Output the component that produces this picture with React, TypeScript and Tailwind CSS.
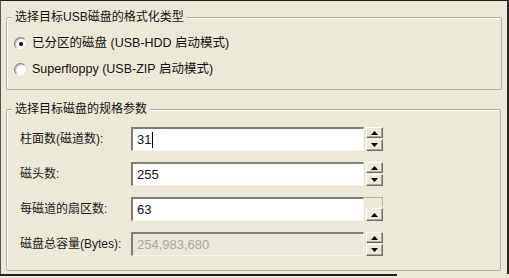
import React from "react";

const font = { fontFamily: '"Liberation Sans", "Noto Sans CJK SC", sans-serif' };

function Tri({ up }: { up: boolean }) {
  return (
    <svg width="7" height="4" viewBox="0 0 7 4">
      {up ? <polygon points="0,4 7,4 3.5,0" fill="#000" /> : <polygon points="0,0 7,0 3.5,4" fill="#000" />}
    </svg>
  );
}

function SpinBtn({ up, h = "h-[11px]" }: { up: boolean; h?: string }) {
  return (
    <div
      className={`w-[17px] ${h} shrink-0 bg-[#ece9d8] border-t border-l border-t-white border-l-white border-r border-b border-r-[#716f64] border-b-[#716f64] shadow-[inset_-1px_-1px_0_#aca899] flex items-center justify-center`}
    >
      <Tri up={up} />
    </div>
  );
}

function Field({
  label,
  value,
  disabled,
  caret,
  odd,
}: {
  label: string;
  value: string;
  disabled?: boolean;
  caret?: boolean;
  odd?: boolean;
}) {
  return (
    <div className="flex items-center h-[24px] shrink-0">
      <div className="w-[124px] shrink-0 pl-[13px] text-[12px] text-[#1a1a1a] whitespace-nowrap">{label}</div>
      <div
        className={`w-[233px] shrink-0 h-[24px] border-t-2 border-l-2 border-t-[#7f7d74] border-l-[#7f7d74] border-r border-b border-r-[#f4f3ee] border-b-[#f4f3ee] flex items-center pl-[4px] text-[13px] ${
          disabled ? "bg-[#ebe8da] text-[#aca899]" : "bg-white text-[#111]"
        }`}
      >
        <span>{value}</span>
        {caret && <span className="inline-block w-px h-[16px] bg-black ml-px" />}
      </div>
      <div className="ml-[2px] flex flex-col gap-[1px] h-[24px]">
        {odd ? (
          <>
            <div className="w-[19px] -ml-[2px] h-[10px] border-t border-r border-[#b8b5a6]" />
            <SpinBtn up h="h-[13px]" />
          </>
        ) : (
          <>
            <SpinBtn up />
            <SpinBtn up={false} h="h-[12px]" />
          </>
        )}
      </div>
    </div>
  );
}

function Radio({ checked }: { checked?: boolean }) {
  return (
    <div className="w-[13px] h-[13px] rounded-full border border-t-[#808080] border-l-[#808080] border-r-[#e6e3d6] border-b-[#e6e3d6] bg-white flex items-center justify-center shadow-[inset_1px_1px_0_#b9b6a8]">
      {checked && <div className="w-[4px] h-[4px] rounded-full bg-black" />}
    </div>
  );
}

export default function App() {
  return (
    <div className="w-[509px] h-[278px] bg-[#ece9d8] overflow-hidden" style={font}>
      <div className="w-[509px] h-[274px] border-t border-t-[#1c1c1c] border-r-2 border-r-[#2a2a2a] border-l border-l-[#555] flex flex-col pt-[16px] pl-[5px]">
        {/* Group 1 */}
        <div className="relative shrink-0 w-[496px] h-[73px] border border-[#b2b0a2] shadow-[inset_1px_1px_0_#fff] rounded-[2px] pt-[19px] pl-[7px] flex flex-col gap-[13px]">
          <span className="absolute -top-[8px] left-[5px] px-[3px] bg-[#ece9d8] text-[12px] leading-[14px] text-[#111]">
            选择目标USB磁盘的格式化类型
          </span>
          <div className="flex items-center gap-[5px] h-[13px] text-[12.5px] text-[#111]">
            <Radio checked />
            <span>已分区的磁盘 (USB-HDD 启动模式)</span>
          </div>
          <div className="flex items-center gap-[5px] h-[13px] text-[12.5px] text-[#111]">
            <Radio />
            <span>Superfloppy (USB-ZIP 启动模式)</span>
          </div>
        </div>

        {/* Group 2 */}
        <div className="relative shrink-0 mt-[19px] w-[495px] h-[162px] border border-[#b2b0a2] shadow-[inset_1px_1px_0_#fff] rounded-[2px] pt-[17px] flex flex-col gap-[11px]">
          <span className="absolute -top-[8px] left-[5px] px-[3px] bg-[#ece9d8] text-[12px] leading-[14px] text-[#111]">
            选择目标磁盘的规格参数
          </span>
          <Field label="柱面数(磁道数):" value="31" caret />
          <Field label="磁头数:" value="255" />
          <Field label="每磁道的扇区数:" value="63" odd />
          <Field label="磁盘总容量(Bytes):" value="254,983,680" disabled />
        </div>
      </div>
      <div className="w-[397px] h-[2px] bg-[#222]" />
    </div>
  );
}
